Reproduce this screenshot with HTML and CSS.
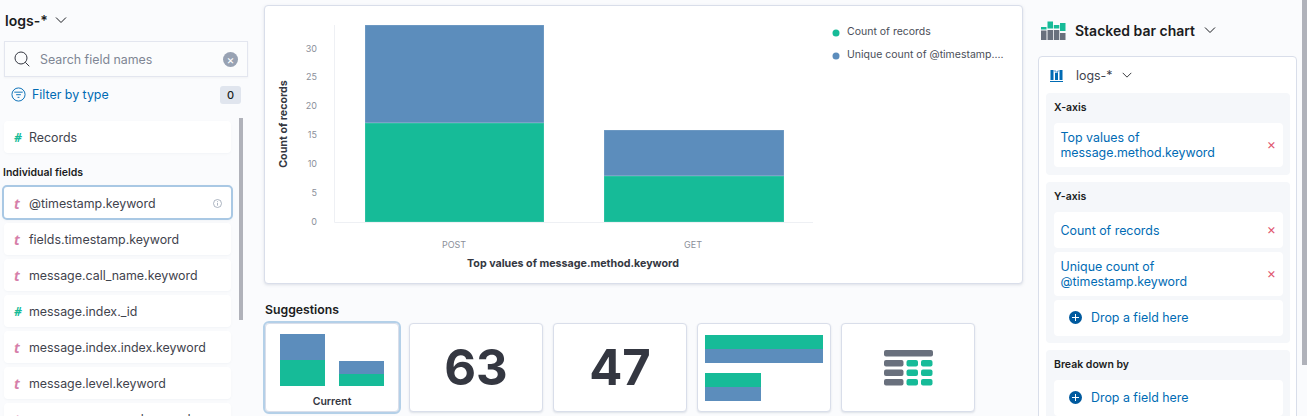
FILE: index.html
```html
<!DOCTYPE html>
<html lang="en">
<head>
  <meta charset="UTF-8"/>
  <title>Lens</title>
  <link rel="stylesheet" href="styles.css">
</head>
<body>
  <div class="fields">
    <div class="picker">
      <span>logs-*</span>
      <svg class="chevron" width="14" height="14" viewBox="0 0 14 14"><path d="M2 4.5l5 5 5-5"/></svg>
    </div>
    <div class="search">
      <svg width="16" height="16" viewBox="0 0 16 16" fill="none" stroke="#343741" stroke-width="1"><circle cx="7" cy="7" r="6"/><path d="M11.3 11.3l4 4"/></svg>
      <span class="search-text">Search field names</span>
      <span class="clear">×</span>
    </div>
    <div class="filter">
      <svg width="15" height="15" viewBox="0 0 16 16" fill="none" stroke="#006bb4" stroke-width="1"><circle cx="8" cy="8" r="7"/><path d="M3.5 5.5h9M5.5 8.2h5M7 11h2"/></svg>
      <span class="filter-text">Filter by type</span>
      <span class="count">0</span>
    </div>
    <div class="list-wrap">
      <div class="list">
        <div class="field"><i class="num">#</i>Records</div>
        <h4>Individual fields</h4>
        <div class="field focused">
          <i class="str">t</i>@timestamp.keyword
          <svg class="info" width="9" height="9" viewBox="0 0 9 9" fill="none" stroke="#98a2b3" stroke-width=".8"><circle cx="4.5" cy="4.5" r="4"/><path d="M4.5 4v2.6M4.5 2.2v1"/></svg>
        </div>
        <div class="field"><i class="str">t</i>fields.timestamp.keyword</div>
        <div class="field"><i class="str">t</i>message.call_name.keyword</div>
        <div class="field"><i class="num">#</i>message.index._id</div>
        <div class="field"><i class="str">t</i>message.index.index.keyword</div>
        <div class="field"><i class="str">t</i>message.level.keyword</div>
        <div class="field"><i class="str">t</i>message.resource.keyword</div>
      </div>
      <div class="scroll-thumb"></div>
    </div>
  </div>

  <div class="workspace">
    <div class="chart-panel">
      <svg class="chart" width="759" height="279" viewBox="264 5 759 279">
        <path class="grid" d="M334.5 25v197.5H813"/>
        <rect class="bar" x="365" y="25" width="179" height="98" fill="#5c8dbc"/>
        <rect class="bar" x="365" y="123" width="179" height="99" fill="#16bb98"/>
        <rect class="bar" x="604" y="130" width="180" height="46" fill="#5c8dbc"/>
        <rect class="bar" x="604" y="176" width="180" height="46" fill="#16bb98"/>
        <g class="tick" text-anchor="end">
          <text x="317" y="225">0</text>
          <text x="317" y="196">5</text>
          <text x="317" y="167">10</text>
          <text x="317" y="138">15</text>
          <text x="317" y="109">20</text>
          <text x="317" y="80">25</text>
          <text x="317" y="52">30</text>
        </g>
        <g class="tick" text-anchor="middle">
          <text x="454" y="248">POST</text>
          <text x="693" y="248">GET</text>
        </g>
        <text class="axis-title" x="573" y="267" text-anchor="middle">Top values of message.method.keyword</text>
        <text class="axis-title" transform="translate(287 124) rotate(-90)" text-anchor="middle">Count of records</text>
        <circle cx="836" cy="33" r="3.5" fill="#16bb98"/>
        <circle cx="836" cy="56" r="3.5" fill="#5c8dbc"/>
        <text class="legend" x="847" y="35">Count of records</text>
        <text class="legend" x="847" y="58">Unique count of @timestamp....</text>
      </svg>
    </div>

    <h3>Suggestions</h3>
    <div class="suggestions">
      <div class="card selected">
        <svg width="104" height="52" viewBox="0 0 104 52">
          <rect x="0" y="0" width="45" height="26" fill="#5c8dbc"/>
          <rect x="0" y="26" width="45" height="26" fill="#16bb98"/>
          <rect x="59" y="27" width="45" height="13" fill="#5c8dbc"/>
          <rect x="59" y="40" width="45" height="12" fill="#16bb98"/>
        </svg>
        <span class="card-label">Current</span>
      </div>
      <div class="card metric">63</div>
      <div class="card metric">47</div>
      <div class="card">
        <svg width="118" height="66" viewBox="0 0 118 66">
          <rect x="0" y="0" width="118" height="14" fill="#16bb98"/>
          <rect x="0" y="14" width="118" height="14" fill="#5c8dbc"/>
          <rect x="0" y="38" width="56" height="14" fill="#16bb98"/>
          <rect x="0" y="52" width="56" height="14" fill="#5c8dbc"/>
        </svg>
      </div>
      <div class="card">
        <svg width="49" height="36" viewBox="0 0 49 36">
          <rect x="0" y="0" width="49" height="6.5" rx="2" fill="#69707d"/>
          <rect x="0" y="10" width="19.5" height="6.5" rx="2" fill="#69707d"/>
          <rect x="0" y="19.5" width="19.5" height="6.5" rx="2" fill="#69707d"/>
          <rect x="0" y="29" width="19.5" height="6.5" rx="2" fill="#69707d"/>
          <rect x="22.5" y="10" width="11.5" height="6.5" rx="2" fill="#16bb98"/>
          <rect x="37" y="10" width="11.5" height="6.5" rx="2" fill="#16bb98"/>
          <rect x="22.5" y="19.5" width="11.5" height="6.5" rx="2" fill="#16bb98"/>
          <rect x="37" y="19.5" width="11.5" height="6.5" rx="2" fill="#16bb98"/>
          <rect x="22.5" y="29" width="11.5" height="6.5" rx="2" fill="#16bb98"/>
          <rect x="37" y="29" width="11.5" height="6.5" rx="2" fill="#16bb98"/>
        </svg>
      </div>
    </div>
  </div>

  <div class="config">
    <div class="type-picker">
      <svg width="25" height="19" viewBox="0 0 25 19">
        <rect x="0" y="9.5" width="5.5" height="9.5" fill="#69707d"/>
        <rect x="0" y="6" width="5.5" height="2.5" fill="#16bb98"/>
        <rect x="6.5" y="9" width="5.5" height="10" fill="#69707d"/>
        <rect x="6.5" y="0.5" width="5.5" height="7" fill="#16bb98"/>
        <rect x="12.8" y="9" width="5.5" height="10" fill="#69707d"/>
        <rect x="12.8" y="4" width="5.5" height="3.5" fill="#16bb98"/>
        <rect x="19" y="12" width="5.5" height="7" fill="#69707d"/>
        <rect x="19" y="2" width="5.5" height="8" fill="#16bb98"/>
      </svg>
      <span>Stacked bar chart</span>
      <svg class="chevron" width="14" height="14" viewBox="0 0 14 14"><path d="M2 4.5l5 5 5-5"/></svg>
    </div>
    <div class="config-panel">
      <div class="layer-head">
        <svg width="13" height="13" viewBox="0 0 13 13"><path d="M0 12.5h13" stroke="#006bb4" fill="none"/><rect x="0.5" y="1" width="3" height="10" fill="#006bb4"/><rect x="9.5" y="1" width="3" height="10" fill="#006bb4"/><rect x="5" y="4" width="3" height="7" fill="#006bb4"/><path d="M3.5 2h2.500v2M9.5 2H7.500v2" stroke="#5a9fd4" fill="none"/></svg>
        <span>logs-*</span>
        <svg class="chevron" width="12" height="12" viewBox="0 0 14 14"><path d="M2 4.5l5 5 5-5"/></svg>
      </div>
      <div class="group x-group">
        <h5>X-axis</h5>
        <div class="dim two"><span>Top values of<br>message.method.keyword</span><b class="remove">×</b></div>
      </div>
      <div class="group">
        <h5>Y-axis</h5>
        <div class="dim"><span>Count of records</span><b class="remove">×</b></div>
        <div class="dim two"><span>Unique count of<br>@timestamp.keyword</span><b class="remove">×</b></div>
        <div class="dim drop"><i class="plus"></i><span>Drop a field here</span></div>
      </div>
      <div class="group">
        <h5>Break down by</h5>
        <div class="dim drop"><i class="plus"></i><span>Drop a field here</span></div>
      </div>
    </div>
    <div class="page-scroll"></div>
  </div>
</body>
</html>
```

FILE: styles.css
```css
* {
  box-sizing: border-box;
}

html, body {
  margin: 0;
  height: 416px;
  overflow: hidden;
}

body {
  display: flex;
  background: #fafbfd;
  color: #3f434d;
  font-family: Inter, "Noto Sans", sans-serif;
  font-size: 12.4px;
}

.chevron {
  fill: none;
  stroke: #1a1c21;
  stroke-width: 1;
}

/* left column */
.fields {
  width: 264px;
  flex: none;
  padding-left: 4px;
}

.picker {
  display: flex;
  align-items: center;
  gap: 6px;
  height: 41px;
  padding: 0 0 1px 1px;
  font-size: 14px;
  font-weight: 600;
  color: #1a1c21;
}

.search {
  display: flex;
  align-items: center;
  width: 244px;
  height: 36px;
  padding: 0 9px;
  background: #fbfcfd;
  border: 1px solid #e3e6ef;
  box-shadow: 0 1px 2px rgba(0,0,0,0.04);
}

.search-text {
  flex: 1;
  margin-left: 10px;
  color: #7f8694;
}

.clear {
  width: 15px;
  height: 15px;
  border-radius: 50%;
  background: #98a2b3;
  color: white;
  font-size: 12px;
  line-height: 15px;
  text-align: center;
}

.filter {
  display: flex;
  align-items: center;
  width: 237px;
  height: 33px;
  margin-top: 1px;
  padding-left: 7px;
  color: #006bb4;
}

.filter-text {
  flex: 1;
  margin-left: 6px;
}

.count {
  width: 21px;
  height: 18px;
  background: #e0e5ee;
  border-radius: 3px;
  color: #1a1c21;
  font-size: 11px;
  font-weight: 500;
  line-height: 18px;
  text-align: center;
}

.list-wrap {
  display: flex;
  gap: 8px;
  margin-top: 10px;
}

.list {
  width: 227px;
  flex: none;
}

.scroll-thumb {
  width: 4px;
  height: 202px;
  margin-top: -3px;
  background: #b0b2ba;
}

.field {
  position: relative;
  display: flex;
  align-items: center;
  height: 32px;
  margin-bottom: 4px;
  background: white;
  border-radius: 4px;
  box-shadow: 0 1px 2px rgba(152,162,179,0.08);
}

.field i {
  width: 25px;
  padding-left: 10px;
  flex: none;
  font-family: "Noto Sans", sans-serif;
  font-weight: bold;
}

.num {
  color: #16bb98;
  font-size: 12px;
}

.str {
  color: #d67fa9;
  font-size: 14px;
}

.focused {
  height: 35px;
  margin: 0 -2px 3px;
  padding: 1px 0 0 2px;
  border: 2px solid #a9c8e4;
  border-radius: 5px;
}

.focused i {
  margin-left: -2px;
}

.info {
  position: absolute;
  right: 9px;
  top: 12px;
}

.list h4 {
  margin: 13px 0 6px -1px;
  height: 13px;
  color: #1a1c21;
  font-size: 10.5px;
  font-weight: 600;
  line-height: 13px;
}

/* middle column */
.workspace {
  width: 759px;
  flex: none;
  padding-top: 5px;
}

.chart-panel {
  height: 279px;
  background: white;
  border: 1px solid #d9deea;
  border-radius: 4px;
  box-shadow: 0 1px 3px rgba(152,162,179,0.3);
  overflow: hidden;
}

.chart {
  display: block;
  margin: -1px;
}

.grid {
  fill: none;
  stroke: #eef0f4;
}

.bar {
  stroke: rgba(255,255,255,0.2);
}

.tick {
  fill: #8b8f9a;
  font-size: 9px;
}

.axis-title {
  fill: #343741;
  font-size: 10.7px;
  font-weight: 700;
}

.legend {
  fill: #4a4e58;
  font-size: 10.5px;
}

.workspace h3 {
  margin: 19px 0 7px 1px;
  height: 13px;
  color: #1a1c21;
  font-size: 12.25px;
  font-weight: 600;
  line-height: 13px;
}

.suggestions {
  display: flex;
  gap: 10px;
  margin-left: 1px;
}

.card {
  display: flex;
  flex-direction: column;
  align-items: center;
  justify-content: center;
  width: 134px;
  height: 89px;
  background: white;
  border: 1px solid #d9deea;
  border-radius: 4px;
  box-shadow: 0 1px 2px rgba(152,162,179,0.3);
}

.selected {
  justify-content: flex-start;
  padding-top: 10px;
  outline: 2px solid #b4d0e8;
}

.selected svg {
  display: block;
}

.card-label {
  margin-top: 9px;
  color: #343741;
  font-size: 10.5px;
  font-weight: 600;
}

.metric {
  color: #343741;
  font-size: 49px;
  font-weight: 700;
}

/* right column */
.config {
  position: relative;
  flex: 1;
  padding-left: 15px;
}

.type-picker {
  display: flex;
  align-items: center;
  height: 51px;
  padding: 9px 0 0 3px;
  gap: 9px;
  color: #1a1c21;
  font-size: 14px;
  font-weight: 600;
}

.type-picker .chevron {
  margin-left: -1px;
}

.config-panel {
  width: 259px;
  height: 400px;
  margin-top: 5px;
  padding: 0 7px;
  background: white;
  border: 1px solid #d9deea;
  border-radius: 4px;
}

.layer-head {
  display: flex;
  align-items: center;
  height: 36px;
  padding-left: 4px;
  gap: 13px;
}

.layer-head .chevron {
  margin-left: -4px;
}

.group {
  width: 244px;
  margin-bottom: 7px;
  padding: 9px 7px 7px 8px;
  background: #f5f7fa;
  border-radius: 4px;
}

.x-group {
  padding-bottom: 8px;
}

.group h5 {
  margin: 0 0 9px;
  height: 12px;
  color: #1a1c21;
  font-size: 10.5px;
  font-weight: 600;
  line-height: 12px;
}

.dim {
  display: flex;
  align-items: center;
  justify-content: space-between;
  height: 36px;
  margin-bottom: 4px;
  padding: 0 7px 0 6.5px;
  background: white;
  border-radius: 4px;
  color: #006bb4;
  line-height: 15px;
}

.dim:last-child {
  margin-bottom: 0;
}

.two {
  height: 44px;
}

.remove {
  margin-bottom: 4px;
  color: #e0556f;
  font-size: 14px;
  font-weight: normal;
}

.drop {
  justify-content: flex-start;
  gap: 9px;
  padding: 0 7px 1px 15px;
}

.plus {
  position: relative;
  width: 13px;
  height: 13px;
  border-radius: 50%;
  background: #005a9e;
}

.plus::before,
.plus::after {
  content: "";
  position: absolute;
  background: white;
}

.plus::before {
  left: 3px;
  top: 6px;
  width: 7px;
  height: 1px;
}

.plus::after {
  left: 6px;
  top: 3px;
  width: 1px;
  height: 7px;
}

.page-scroll {
  position: absolute;
  right: 0;
  top: 0;
  width: 5px;
  height: 365px;
  background: #b0b2ba;
}
```
